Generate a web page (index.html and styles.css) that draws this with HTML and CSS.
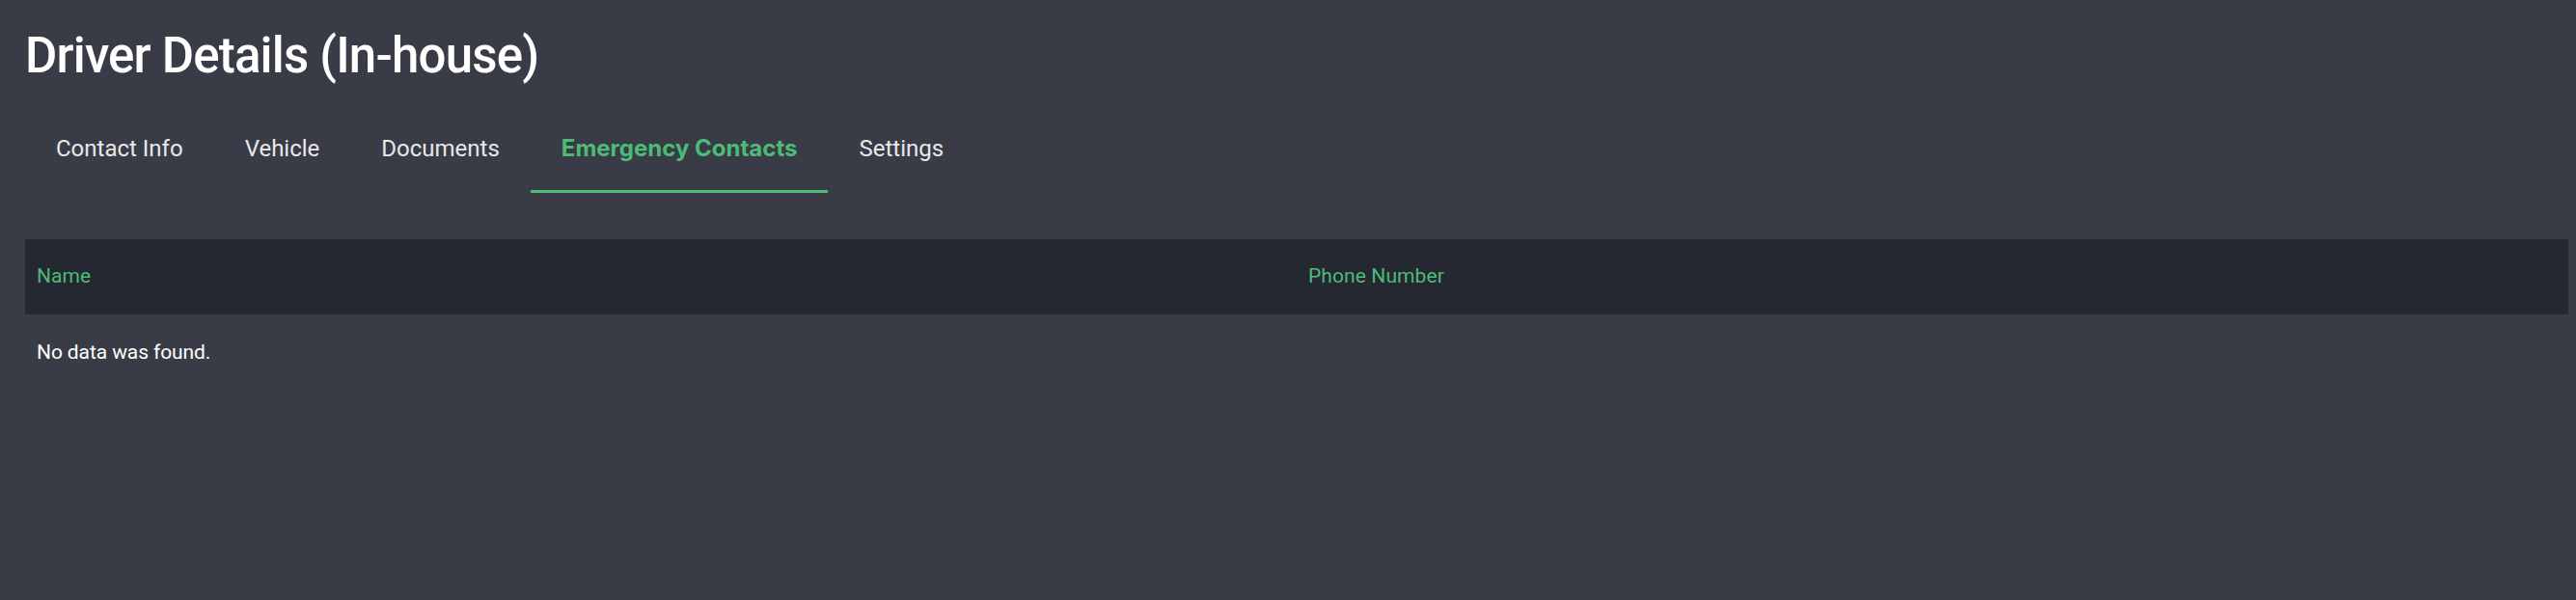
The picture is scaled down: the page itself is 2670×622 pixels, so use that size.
FILE: index.html
```html
<!DOCTYPE html>
<html lang="en">
<head>
<meta charset="utf-8">
<title>Driver Details (In-house)</title>
<link rel="stylesheet" href="styles.css">
</head>
<body>
<main class="page">
  <h1 class="page-title">Driver Details (In-house)</h1>
  <nav class="tabs">
    <a class="tab">Contact Info</a>
    <a class="tab">Vehicle</a>
    <a class="tab">Documents</a>
    <a class="tab tab-active">Emergency Contacts</a>
    <a class="tab">Settings</a>
  </nav>
  <table class="data-table">
    <thead>
      <tr>
        <th class="col-name">Name</th>
        <th class="col-phone">Phone Number</th>
      </tr>
    </thead>
  </table>
  <p class="empty">No data was found.</p>
</main>
</body>
</html>
```

FILE: styles.css
```css
html, body {
  margin: 0;
  padding: 0;
}

body {
  background: #393c46;
  color: #ffffff;
  font-family: Roboto, "Noto Sans", sans-serif;
  min-height: 622px;
}

.page {
  padding: 0 8px 0 26px;
}

.page-title {
  margin: 28px 0 0;
  font-size: 51px;
  line-height: 60px;
  font-weight: 500;
  letter-spacing: -0.8px;
  color: #ffffff;
}

.tabs {
  display: flex;
  margin-top: 24px;
}

.tab {
  padding: 28px 32px 29px;
  font-size: 24px;
  line-height: 28px;
  color: #e8e8ea;
  border-bottom: 3px solid transparent;
  cursor: pointer;
}

.tab-active {
  font-family: Inter, Roboto, sans-serif;
  color: #4cbb78;
  font-weight: 700;
  border-bottom-color: #4cbb78;
}

.data-table {
  width: 100%;
  margin-top: 48px;
  border-collapse: collapse;
  table-layout: fixed;
}

.data-table th {
  background: #252830;
  color: #4cbb78;
  text-align: left;
  font-weight: 400;
  font-size: 21px;
  line-height: 26px;
  letter-spacing: 0.1px;
  padding: 25px 12px 27px;
}

.empty {
  margin: 26px 0 0;
  padding-left: 12px;
  font-size: 21px;
  line-height: 26px;
  letter-spacing: -0.1px;
  color: #ffffff;
}
```
